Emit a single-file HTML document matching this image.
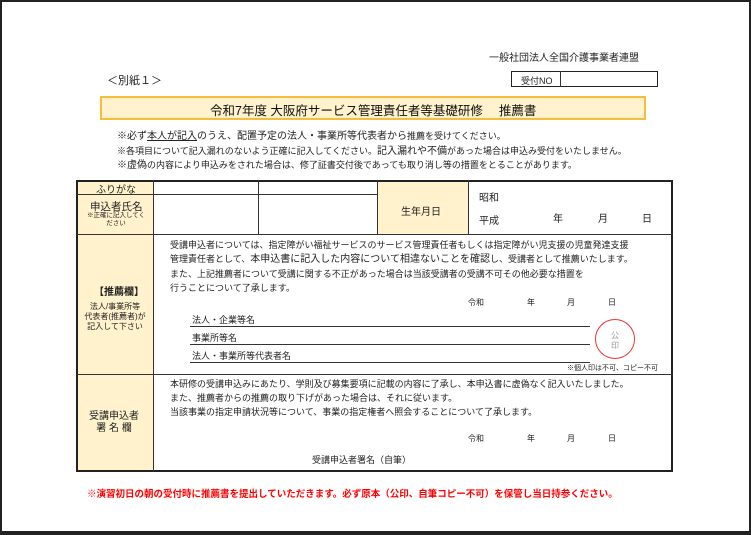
<!DOCTYPE html>
<html><head><meta charset="utf-8"><style>
*{margin:0;padding:0;box-sizing:border-box}
body{width:751px;height:535px;background:#222;position:relative;overflow:hidden;font-family:"Liberation Sans","Noto Sans CJK JP",sans-serif;color:#222}
#pg{position:absolute;left:2px;top:2px;width:747px;height:529px;background:#fff}
.a{position:absolute;white-space:nowrap}
.f10{font-size:10px}.f9{font-size:9px}.f8{font-size:8px}.f7{font-size:7px}
.ln{position:absolute;background:#333}
.y{position:absolute;background:#fff2cc}
</style></head><body><div id="pg"></div>
<div class="a f10" style="left:489px;top:49px">一般社団法人全国介護事業者連盟</div>
<div class="a" style="left:107px;top:72px;font-size:11px">＜別紙１＞</div>
<div class="a" style="left:511px;top:71px;width:147px;height:16px;border:1px solid #222"></div>
<div class="ln" style="left:560px;top:71px;width:1px;height:16px"></div>
<div class="a f9" style="left:521px;top:74px">受付NO</div>
<div class="a" style="left:100px;top:96px;width:546px;height:24px;background:#fff2cc;border:2px solid #f6be3c"></div>
<div class="a" style="left:210px;top:100px;font-size:12.5px;color:#111">令和7年度 大阪府サービス管理責任者等基礎研修　 推薦書</div>
<div class="a f10" style="left:117px;top:127px">※必ず<u>本人が記入</u>のうえ、配置予定の法人・事業所等代表者から<span class="f9">推薦を受けてください。</span></div>
<div class="a f9" style="left:117px;top:142px">※各項目について記入漏れのないよう正確に記入してください。<span class="f10">記入漏れや不備</span>があった場合は申込み受付をいたしません。</div>
<div class="a f9" style="left:117px;top:156px"><span class="f10">※虚偽</span>の内容により申込みをされた場合は、修了証書交付後であっても取り消し等の措置をとることがあります。</div>

<div class="y" style="left:77px;top:181px;width:76px;height:290px"></div>
<div class="y" style="left:377px;top:181px;width:91px;height:53px"></div>
<div class="a" style="left:76px;top:180px;width:597px;height:292px;border:2px solid #222"></div>
<div class="ln" style="left:153px;top:180px;width:1px;height:292px"></div>
<div class="ln" style="left:258px;top:180px;width:1px;height:54px"></div>
<div class="ln" style="left:377px;top:180px;width:1px;height:54px"></div>
<div class="ln" style="left:468px;top:180px;width:1px;height:54px"></div>
<div class="ln" style="left:76px;top:194px;width:301px;height:1px"></div>
<div class="ln" style="left:76px;top:234px;width:597px;height:1px"></div>
<div class="ln" style="left:76px;top:374px;width:597px;height:1px"></div>

<div class="a f10" style="left:96px;top:181px">ふりがな</div>
<div class="a" style="left:90px;top:199px;font-size:10.5px">申込者氏名</div>
<div class="a" style="left:80px;top:212px;width:72px;text-align:center;font-size:6.5px;line-height:8px">※正確に記入してく<br>ださい</div>
<div class="a f10" style="left:401px;top:203px">生年月日</div>
<div class="a f10" style="left:479px;top:189px">昭和</div>
<div class="a f10" style="left:479px;top:212px">平成</div>
<div class="a f10" style="left:553px;top:210px">年</div>
<div class="a f10" style="left:598px;top:210px">月</div>
<div class="a f10" style="left:642px;top:210px">日</div>

<div class="a f10" style="left:94px;top:283px;font-weight:bold">【推薦欄】</div>
<div class="a f8" style="left:78px;top:302px;width:74px;text-align:center;line-height:10px">法人/事業所等<br>代表者(推薦者)が<br>記入して下さい</div>
<div class="a f9" style="left:170px;top:238px;line-height:14px">受講申込者については、指定障がい福祉サービスのサービス管理責任者もしくは指定障がい児支援の児童発達支援<br>管理責任者として、<span class="f10">本申込書に記入した内容について相違ないことを確認</span>し、受講者として推薦いたします。<br>また、上記推薦者について受講に関する不正があった場合は当該受講者の受講不可その他必要な措置を<br>行うことについて了承します。</div>
<div class="a f8" style="left:468px;top:297px">令和</div>
<div class="a f8" style="left:527px;top:297px">年</div>
<div class="a f8" style="left:567px;top:297px">月</div>
<div class="a f8" style="left:608px;top:297px">日</div>
<div class="a f9" style="left:192px;top:313px">法人・企業等名</div>
<div class="ln" style="left:190px;top:326px;width:400px;height:1px"></div>
<div class="a f9" style="left:192px;top:331px">事業所等名</div>
<div class="ln" style="left:190px;top:344px;width:400px;height:1px"></div>
<div class="a f9" style="left:192px;top:349px">法人・事業所等代表者名</div>
<div class="ln" style="left:190px;top:362px;width:400px;height:1px"></div>
<div class="a" style="left:595px;top:319px;width:40px;height:40px;border:1px solid #e33;border-radius:50%"></div>
<div class="a f8" style="left:611px;top:331px;color:#999;line-height:10px">公<br>印</div>
<div class="a f7" style="left:567px;top:363px">※個人印は不可、コピー不可</div>

<div class="a" style="left:89px;top:411px;font-size:10px;line-height:12px;text-align:center">受講申込者<br>署 名 欄</div>
<div class="a f9" style="left:170px;top:377px;line-height:14px">本研修の受講申込みにあたり、学則及び募集要項に記載の内容に了承し、本申込書に虚偽なく記入いたしました。<br>また、推薦者からの推薦の取り下げがあった場合は、それに従います。<br>当該事業の指定申請状況等について、事業の指定権者へ照会することについて了承します。</div>
<div class="a f8" style="left:468px;top:433px">令和</div>
<div class="a f8" style="left:527px;top:433px">年</div>
<div class="a f8" style="left:567px;top:433px">月</div>
<div class="a f8" style="left:608px;top:433px">日</div>
<div class="a f9" style="left:312px;top:453px">受講申込者署名（自筆）</div>

<div class="a" style="left:87px;top:486px;font-size:9.5px;font-weight:bold;color:#f00">※演習初日の朝の受付時に推薦書を提出していただきます。必ず原本（公印、自筆コピー不可）を保管し当日持参ください。</div>
</body></html>
